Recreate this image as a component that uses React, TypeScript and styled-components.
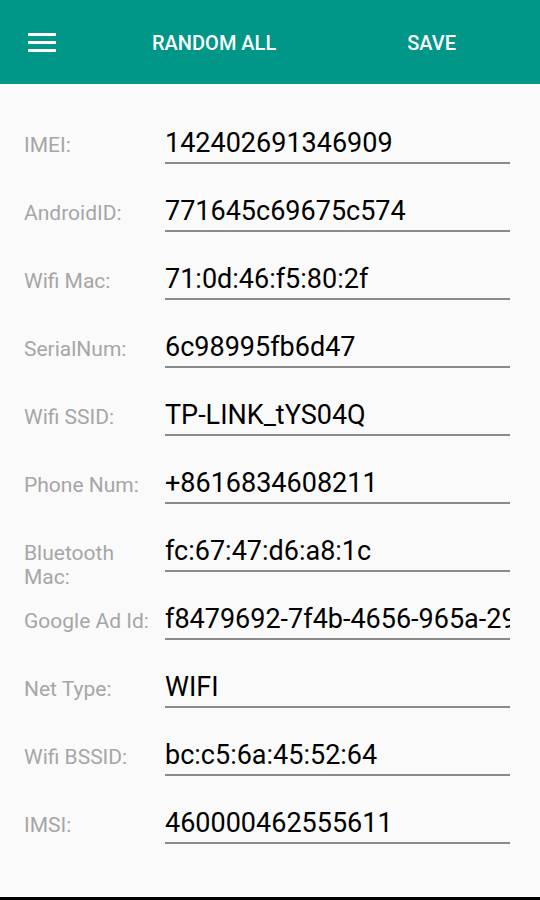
import React from "react";
import styled, { createGlobalStyle } from "styled-components";

const GlobalStyle = createGlobalStyle`
  html, body {
    margin: 0;
    padding: 0;
    background: #fafafa;
  }
  body {
    font-family: Roboto, "Noto Sans", "Liberation Sans", sans-serif;
  }
  * { box-sizing: border-box; }
`;

const Screen = styled.div`
  width: 540px;
  height: 900px;
  display: flex;
  flex-direction: column;
  background: #fafafa;
  overflow: hidden;
`;

const Toolbar = styled.header`
  height: 84px;
  flex: 0 0 84px;
  background: #009688;
  display: flex;
  align-items: center;
  padding: 2px 0 0 28px;
`;

const MenuButton = styled.div`
  width: 28px;
  height: 19px;
  display: flex;
  margin-top: -1px;
`;

const ActionButton = styled.div<{ $gap: number }>`
  margin-left: ${(p) => p.$gap}px;
  color: #ffffff;
  font-family: Roboto, sans-serif;
  font-weight: 500;
  font-size: 20px;
  line-height: 20px;
  white-space: nowrap;
`;

const Content = styled.main`
  flex: 1;
  padding-top: 43px;
  display: flex;
  flex-direction: column;
`;

const Row = styled.div`
  height: 68px;
  display: flex;
  align-items: baseline;
  padding-left: 24px;
`;

const Label = styled.div`
  width: 141px;
  flex: 0 0 141px;
  font-size: 21px;
  line-height: 24px;
  color: #a6a6a6;
  padding-right: 8px;
`;

const Field = styled.div`
  width: 345px;
  flex: 0 0 345px;
  font-size: 27px;
  line-height: 32px;
  color: #000000;
  white-space: nowrap;
  overflow: hidden;
  padding-bottom: 3px;
  border-bottom: 2px solid #8a8a8a;
`;

const BottomBar = styled.div`
  height: 3px;
  flex: 0 0 3px;
  background: #000000;
`;

const rows: [string, string][] = [
  ["IMEI:", "142402691346909"],
  ["AndroidID:", "771645c69675c574"],
  ["Wifi Mac:", "71:0d:46:f5:80:2f"],
  ["SerialNum:", "6c98995fb6d47"],
  ["Wifi SSID:", "TP-LINK_tYS04Q"],
  ["Phone Num:", "+8616834608211"],
  ["Bluetooth Mac:", "fc:67:47:d6:a8:1c"],
  ["Google Ad Id:", "f8479692-7f4b-4656-965a-29c1e8d3b7a2"],
  ["Net Type:", "WIFI"],
  ["Wifi BSSID:", "bc:c5:6a:45:52:64"],
  ["IMSI:", "460000462555611"],
];

export default function App() {
  return (
    <>
      <GlobalStyle />
      <Screen>
        <Toolbar>
          <MenuButton>
            <svg width="28" height="19" viewBox="0 0 28 19">
              <rect x="0" y="0" width="28" height="3" fill="#fff" />
              <rect x="0" y="8" width="28" height="3" fill="#fff" />
              <rect x="0" y="16" width="28" height="3" fill="#fff" />
            </svg>
          </MenuButton>
          <ActionButton $gap={96}>RANDOM ALL</ActionButton>
          <ActionButton $gap={131}>SAVE</ActionButton>
        </Toolbar>
        <Content>
          {rows.map(([label, value]) => (
            <Row key={label}>
              <Label>{label}</Label>
              <Field>{value}</Field>
            </Row>
          ))}
        </Content>
        <BottomBar />
      </Screen>
    </>
  );
}
